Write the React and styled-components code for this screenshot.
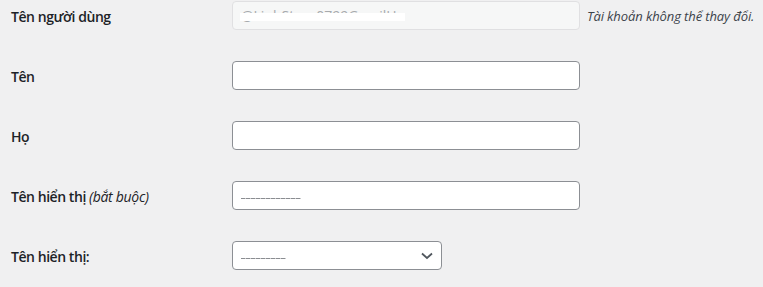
import React from "react";
import styled, { createGlobalStyle } from "styled-components";

const Global = createGlobalStyle`
  html, body { margin: 0; padding: 0; background: #f0f0f1; }
  body { font-family: "Open Sans", "Noto Sans", Arial, sans-serif; color: #1d2327; }
`;

const Form = styled.div`
  display: flex;
  flex-direction: column;
  padding: 1px 0 0 11px;
`;

const Row = styled.div`
  display: grid;
  grid-template-columns: 221px auto;
  height: 60px;
  align-items: start;
`;

const Label = styled.div`
  font-size: 14px;
  font-weight: 600;
  line-height: 20px;
  letter-spacing: -0.45px;
  padding-top: 6px;
  color: #1d2327;
  white-space: nowrap;
  em { font-weight: 400; font-style: italic; letter-spacing: -0.3px; }
`;

const Field = styled.div`
  display: flex;
  align-items: center;
  gap: 7px;
`;

const Box = styled.div`
  position: relative;
  box-sizing: border-box;
  width: ${(p) => p.$w}px;
  height: 29px;
  border: 1px solid ${(p) => (p.$disabled ? "#e0e0e2" : "#8c8f94")};
  border-radius: 4px;
  background: ${(p) => (p.$disabled ? "#f6f7f7" : "#fff")};
  display: flex;
  align-items: center;
  padding: 0 8px;
  font-size: 14px;
  color: ${(p) => (p.$disabled ? "#a7aaad" : "#2c3338")};
`;

const Masked = styled.span`
  position: relative;
  display: inline-block;
  line-height: 18px;
  white-space: nowrap;
  &::after {
    content: "";
    position: absolute;
    left: -1px;
    right: -8px;
    top: 6px;
    height: 8px;
    background: #fff;
  }
`;

const Trace = styled.span`
  display: inline-block;
  width: ${(p) => p.$w}px;
  height: 1px;
  margin-top: 6px;
  background: repeating-linear-gradient(90deg, #8a8d91 0 4px, #c8c9cb 4px 5px);
`;

const Description = styled.span`
  font-size: 13px;
  font-style: italic;
  color: #3c434a;
  letter-spacing: -0.1px;
  white-space: nowrap;
`;

const Chevron = styled.svg`
  position: absolute;
  right: 8px;
  top: 50%;
  transform: translateY(-50%);
`;

export default function App() {
  return (
    <>
      <Global />
      <Form>
        <Row>
          <Label>Tên người dùng</Label>
          <Field>
            <Box $w={348} $disabled>
              <Masked>@LinhStore0799GmailH</Masked>
            </Box>
            <Description>Tài khoản không thể thay đổi.</Description>
          </Field>
        </Row>
        <Row>
          <Label>Tên</Label>
          <Field>
            <Box $w={348} />
          </Field>
        </Row>
        <Row>
          <Label>Họ</Label>
          <Field>
            <Box $w={348} />
          </Field>
        </Row>
        <Row>
          <Label>
            Tên hiển thị <em>(bắt buộc)</em>
          </Label>
          <Field>
            <Box $w={348}>
              <Trace $w={60} />
            </Box>
          </Field>
        </Row>
        <Row>
          <Label>Tên hiển thị:</Label>
          <Field>
            <Box $w={210}>
              <Trace $w={45} />
              <Chevron width="12" height="8" viewBox="0 0 12 8" fill="none">
                <path d="M1 1.5 L6 6 L11 1.5" stroke="#50575e" strokeWidth="1.8" />
              </Chevron>
            </Box>
          </Field>
        </Row>
      </Form>
    </>
  );
}
